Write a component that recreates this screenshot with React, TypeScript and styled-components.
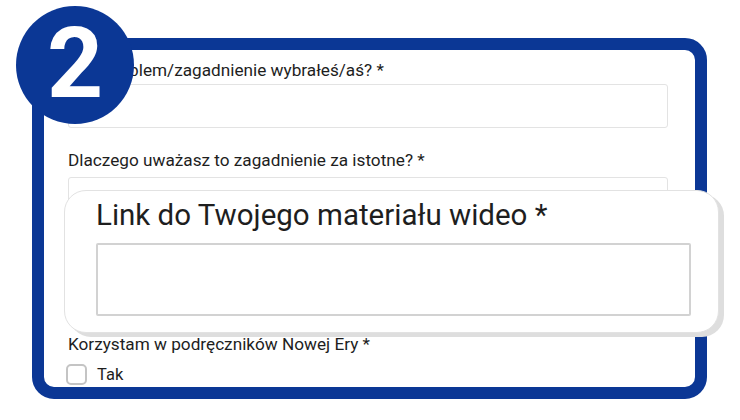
import React from "react";
import styled, { createGlobalStyle } from "styled-components";

const Global = createGlobalStyle`
  html, body { margin: 0; padding: 0; background: #fff; }
  body { font-family: Roboto, "Liberation Sans", Arial, sans-serif; color: #1e1e1e; }
`;

const BLUE = "#0b3795";

const Page = styled.div`
  position: relative;
  width: 740px;
  height: 420px;
  padding: 38px 0 0 32px;
  box-sizing: border-box;
  overflow: hidden;
`;

const Frame = styled.div`
  width: 675px;
  height: 361px;
  box-sizing: border-box;
  border: 12px solid ${BLUE};
  border-radius: 22px;
  background: #fff;
  padding: 10px 27px 0 24px;
  display: flex;
  flex-direction: column;
`;

const Label = styled.div`
  font-size: 17.2px;
  line-height: 20px;
  color: #1e1e1e;
  white-space: nowrap;
`;

const Field = styled.div<{ $gap?: number; $inner?: number }>`
  display: flex;
  flex-direction: column;
  gap: ${(p) => p.$inner ?? 7}px;
  margin-bottom: ${(p) => p.$gap ?? 0}px;
`;

const Input = styled.div`
  height: 44px;
  border: 1.5px solid #e3e3e3;
  border-radius: 3px;
  box-sizing: border-box;
`;

const CheckRow = styled.label`
  display: flex;
  align-items: center;
  gap: 10px;
  font-size: 16.5px;
  margin-top: 10px;
  margin-left: -2px;
`;

const Box = styled.span`
  width: 21px;
  height: 21px;
  box-sizing: border-box;
  border: 2px solid #c4c4c4;
  border-radius: 5px;
`;

const Badge = styled.div`
  position: absolute;
  left: 16px;
  top: 6px;
  width: 118px;
  height: 118px;
  border-radius: 50%;
  background: ${BLUE};
  color: #fff;
  display: flex;
  align-items: center;
  justify-content: center;
  font-family: Roboto, "Liberation Sans", sans-serif;
  font-weight: 700;
  font-size: 98px;
  line-height: 1;
  padding-bottom: 2px;
  box-sizing: border-box;
`;

const Card = styled.div`
  position: absolute;
  left: 64px;
  top: 190px;
  width: 655px;
  height: 143px;
  box-sizing: border-box;
  background: #fff;
  border: 1.5px solid #e2e2e2;
  border-radius: 22px;
  box-shadow: 5px 4px 0 #dedede;
  padding: 8px 27px 0 31px;
  display: flex;
  flex-direction: column;
  gap: 12px;
`;

const CardTitle = styled.div`
  font-size: 29.5px;
  line-height: 32px;
  color: #1e1e1e;
  white-space: nowrap;
`;

const BigInput = styled.div`
  height: 73px;
  border: 2px solid #d2d2d2;
  border-radius: 2px;
  box-sizing: border-box;
`;

export default function App() {
  return (
    <>
      <Global />
      <Page>
        <Frame>
          <Field $gap={22} $inner={4}>
            <Label>Jaki problem/zagadnienie wybrałeś/aś? *</Label>
            <Input />
          </Field>
          <Field $gap={14} $inner={7}>
            <Label>Dlaczego uważasz to zagadnienie za istotne? *</Label>
            <Input />
          </Field>
          <Field $gap={26} $inner={9}>
            <Label>Link do Twojego materiału wideo *</Label>
            <Input />
          </Field>
          <Label>Korzystam w podręczników Nowej Ery *</Label>
          <CheckRow>
            <Box />
            Tak
          </CheckRow>
        </Frame>
        <Card>
          <CardTitle>Link do Twojego materiału wideo *</CardTitle>
          <BigInput />
        </Card>
        <Badge>2</Badge>
      </Page>
    </>
  );
}
